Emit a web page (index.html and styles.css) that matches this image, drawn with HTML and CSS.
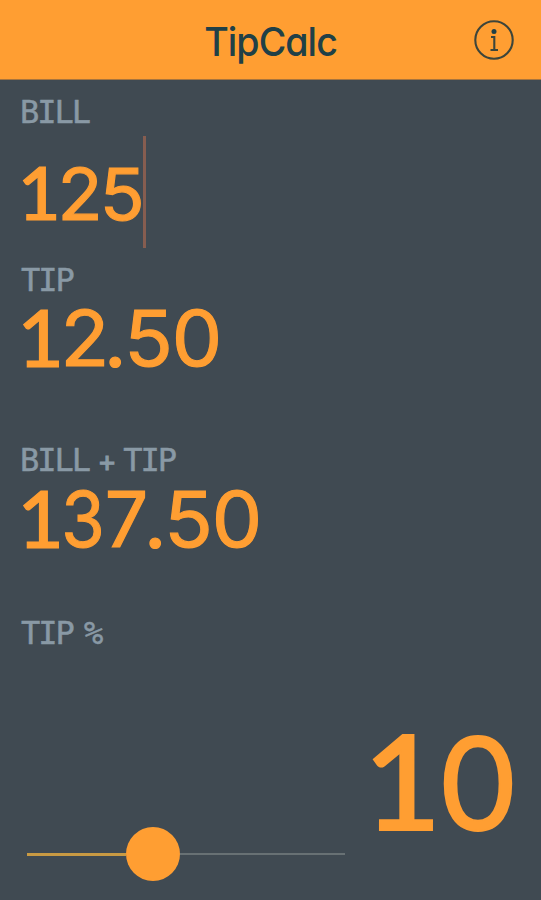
FILE: index.html
```html
<!DOCTYPE html>
<html lang="en">
<head>
<meta charset="utf-8">
<title>TipCalc</title>
<link rel="stylesheet" href="styles.css">
</head>
<body>
<header class="bar">
  <h1 class="title">TipCalc</h1>
  <svg class="info" viewBox="0 0 42 42" aria-label="Info">
    <circle cx="21" cy="21" r="18.7"/>
    <circle class="dot" cx="21" cy="12.5" r="2.5"/>
    <path d="M18 18h3.3v13M17.5 31h7.5"/>
  </svg>
</header>
<main>
  <section class="field bill">
    <h2 class="label">BILL</h2>
    <div class="entry"><div class="value"><span class="one">1</span><span class="two">2</span><span class="five">5</span></div><i class="caret"></i></div>
  </section>
  <section class="field tip">
    <h2 class="label">TIP</h2>
    <div class="value"><span class="one">1</span><span class="two">2</span><span class="point">.</span><span class="five">5</span><span class="zero">0</span></div>
  </section>
  <section class="field total">
    <h2 class="label">BILL <span class="plus">+</span> TIP</h2>
    <div class="value"><span class="one">1</span><span class="three">3</span><span class="seven">7</span><span class="point">.</span><span class="five">5</span><span class="zero">0</span></div>
  </section>
  <section class="percent">
    <h2 class="label">TIP %</h2>
    <div class="controls">
      <div class="slider"><i class="filled"></i><i class="thumb"></i><i class="rest"></i></div>
      <div class="value big"><span class="one">1</span><span class="zero">0</span></div>
    </div>
  </section>
</main>
</body>
</html>
```
FILE: styles.css
```css
* { box-sizing: border-box; }
body {
  margin: 0;
  height: 900px;
  overflow: hidden;
  background: #404a52;
  color: #ff9e32;
  font-family: Lato, sans-serif;
}
h1, h2 { margin: 0; font-weight: 400; }
.bar {
  display: grid;
  grid-template-columns: 1fr auto 1fr;
  align-items: center;
  height: 80px;
  padding-right: 26px;
  background: #ff9e32;
  border-bottom: 1px solid #a8753d;
}
.title {
  grid-column: 2;
  margin: 4px -13px 0 13px;
  font: 450 40px/50px Inter, sans-serif;
  font-feature-settings: "cv11";
  letter-spacing: -1px;
  color: #204047;
  transform: scaleX(.94);
}
.info {
  justify-self: end;
  width: 42px;
  height: 42px;
  fill: none;
  stroke: #3d453b;
  stroke-width: 2.1;
}
.info .dot { fill: #204047; stroke: none; }
.field { padding-left: 20px; }
.bill { height: 168px; padding-top: 16px; }
.tip { height: 180px; padding-top: 16px; }
.total { height: 173px; padding-top: 16px; }
.label {
  font: 400 32px/32px "DejaVu Sans Mono", monospace;
  letter-spacing: -2px;
  word-spacing: -6px;
  color: #8999a5;
  white-space: pre;
  -webkit-text-stroke: .5px #8999a5;
}
.total .label { word-spacing: -7px; }
.tip .label, .percent .label { padding-left: 1px; }
.plus { font-size: 26px; -webkit-text-stroke-width: 1.2px; }

/* Digits are spaced proportionally, each in its own cell. */
.value {
  display: flex;
  font: 400 80px/80px Inter, sans-serif;
  -webkit-text-stroke: 1.2px #ff9e32;
}
.value span {
  display: flex;
  justify-content: center;
  transform: translateY(.028em) scaleY(.965);
}
.value .one, .value .point {
  font-family: Lato, sans-serif;
  font-weight: 500;
  transform: translate(-.01em, 0);
}
.one { width: .5375em; }
.two { width: .55em; }
.three { width: .5em; }
.five { width: .5875em; }
.seven { width: .55em; }
.zero { width: .625em; }
.point { width: .225em; }
.value .three { transform: translateY(.028em) scale(.88, .965); }
.value .seven { transform: translate(.02em, .028em) scale(.96, .965); }
.total .value { margin-top: -1px; }
.entry { display: flex; align-items: center; height: 112px; margin-top: 8px; }
.entry .value { font-size: 74px; }
.caret { width: 3px; height: 112px; margin-left: -1px; background: #865d50; }
.percent { padding: 16px 21px 0 20px; }
.controls { display: flex; justify-content: space-between; height: 235px; }
.slider {
  display: flex;
  align-items: center;
  width: 318px;
  height: 54px;
  margin: 178px 0 0 7px;
}
.filled { width: 99px; height: 3px; background: #c99a43; }
.thumb { width: 54px; height: 54px; border-radius: 50%; background: #ff9e32; }
.rest { flex: 1; height: 2px; background: #687174; }
.value.big { font-size: 134px; line-height: 150px; margin-top: 56px; -webkit-text-stroke-width: 2px; }
.value.big .one { transform: translateX(.015em) scaleY(.985); }
.value.big .zero { transform: translateY(.018em) scale(.97, .955); }
```
